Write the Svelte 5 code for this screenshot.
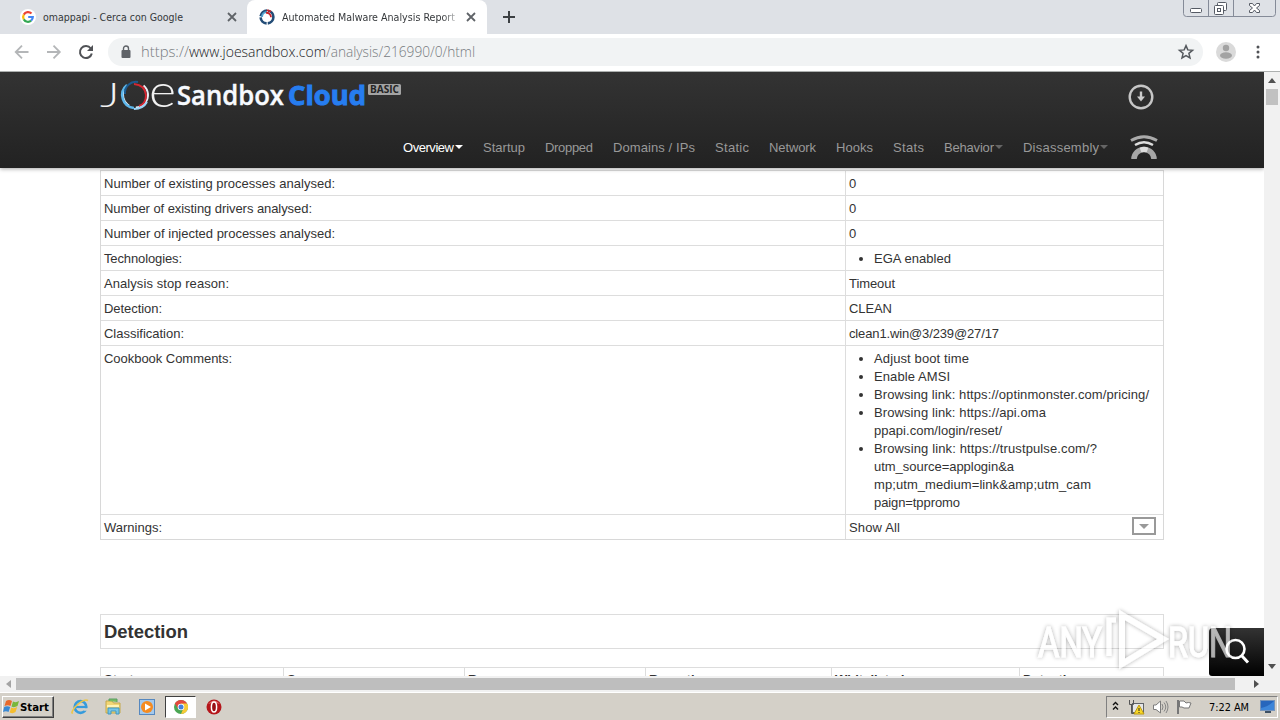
<script>
  const nav = [
    { label: 'Overview', width: 51, gap: 20, caret: true, active: true },
    { label: 'Startup', width: 42, gap: 20 },
    { label: 'Dropped', width: 48, gap: 20 },
    { label: 'Domains / IPs', width: 82, gap: 20 },
    { label: 'Static', width: 34, gap: 20 },
    { label: 'Network', width: 47, gap: 20 },
    { label: 'Hooks', width: 37, gap: 20 },
    { label: 'Stats', width: 31, gap: 20 },
    { label: 'Behavior', width: 50, gap: 20, caret: true },
    { label: 'Disassembly', width: 76, gap: 0, caret: true }
  ];
  const rows = [
    { label: 'Number of existing processes analysed:', w: 231, value: '0', vw: 7 },
    { label: 'Number of existing drivers analysed:', w: 208, value: '0', vw: 7 },
    { label: 'Number of injected processes analysed:', w: 231, value: '0', vw: 7 },
    { label: 'Technologies:', w: 78, items: [[['EGA enabled', 77]]] },
    { label: 'Analysis stop reason:', w: 125, value: 'Timeout', vw: 46 },
    { label: 'Detection:', w: 58, value: 'CLEAN', vw: 43 },
    { label: 'Classification:', w: 80, value: 'clean1.win@3/239@27/17', vw: 150 },
    {
      label: 'Cookbook Comments:', w: 128,
      items: [
        [['Adjust boot time', 95]],
        [['Enable AMSI', 76]],
        [['Browsing link: https://optinmonster.com/pricing/', 275]],
        [['Browsing link: https://api.oma', 172], ['ppapi.com/login/reset/', 128]],
        [
          ['Browsing link: https://trustpulse.com/?', 223],
          ['utm_source=applogin&a', 140],
          ['mp;utm_medium=link&amp;utm_cam', 217],
          ['paign=tppromo', 86]
        ]
      ]
    },
    { label: 'Warnings:', w: 58, value: 'Show All', vw: 51, toggle: true }
  ];
  const columns = ['Strategy', 'Score', 'Range', 'Reporting', 'Whitelisted', 'Detection'];
</script>

{#snippet line(text, width)}
  <svg class="line" width={width} height="18"><text x="0" y="14" textLength={width} lengthAdjust="spacing">{text}</text></svg>
{/snippet}

<div class="screen">
  <div class="tabs">
    <div class="tab idle">
      <svg width="16" height="16" viewBox="0 0 16 16"><circle cx="8" cy="8" r="8" fill="#fff" /><g fill="none" stroke-width="2.2"><path d="M11.5 4.6A4.8 4.8 0 0 0 3.8 5.6" stroke="#ea4335" /><path d="M3.8 5.6A4.9 4.9 0 0 0 3.8 10.4" stroke="#fbbc05" /><path d="M3.8 10.4A4.8 4.8 0 0 0 11.1 11.7" stroke="#34a853" /><path d="M11.1 11.7A5 5 0 0 0 12.8 8H8.2" stroke="#4285f4" /></g></svg>
      <svg class="title" width="145" height="18"><text x="0" y="13" textLength="140" lengthAdjust="spacingAndGlyphs">omappapi - Cerca con Google</text></svg>
      <svg class="close" width="10" height="10" viewBox="0 0 10 10"><path d="M1 1 9 9M9 1 1 9" /></svg>
    </div>
    <div class="tab active">
      <svg width="16" height="16" viewBox="0 0 16 16" fill="none"><circle cx="8" cy="8" r="6.4" stroke="#234d77" stroke-width="2.6" stroke-dasharray="9 1.2" /><path d="M3 8a5 5 0 0 1 5-5" stroke="#51a3d0" stroke-width="2" /><path d="M7 3.800a4.500 4.500 0 0 1 5 4.500M8 1.200l4 1.300" stroke="#c7262d" stroke-width="1.800" /></svg>
      <svg class="title fade" width="175" height="18"><text x="0" y="13" textLength="173" lengthAdjust="spacingAndGlyphs">Automated Malware Analysis Report</text></svg>
      <svg class="close" width="10" height="10" viewBox="0 0 10 10"><path d="M1 1 9 9M9 1 1 9" /></svg>
    </div>
    <svg class="plus" width="12" height="12"><path d="M6 0V12M0 6H12" stroke="#3c4043" stroke-width="2" /></svg>
    <svg class="winbtns" width="94" height="18" fill="none">
      <path d="M.5 0V13.500Q.5 16.500 3.500 16.500H89.500Q92.500 16.500 92.500 13.500V0M25.500 0V16M50.500 0V16" stroke="#858b98" />
      <rect x="7.500" y="8.500" width="11" height="4" rx="1" fill="#fff" stroke="#555a64" />
      <g stroke="#555a64" fill="#fff"><rect x="34.500" y="2.500" width="9" height="8" rx="1" /><rect x="31.500" y="5.500" width="9" height="9" rx="1" /><rect x="34.500" y="8.500" width="3" height="3" /></g>
      <path d="M66.500 3.500H69.500L71.500 6 73.500 3.500H76.500V5.500L73.500 8 76.500 10.500V12.500H73.500L71.500 10 69.500 12.500H66.500V10.500L69.500 8 66.500 5.500Z" fill="#fff" stroke="#555a64" />
    </svg>
  </div>

  <div class="toolbar">
    <svg class="navicons" width="82" height="16" viewBox="0 0 82 16" fill="none" stroke-width="1.8">
      <g stroke="#b4b6b8"><path d="M14.500 8H2M8 1.700 1.700 8 8 14.300" /><path d="M33 8H45.500M39.500 1.700 45.800 8 39.500 14.300" /></g>
      <path d="M76.800 4.500A6 6 0 1 0 77.800 9.500" stroke="#505256" stroke-width="2" /><path d="M79 1V7H73Z" fill="#505256" />
    </svg>
    <div class="address">
      <svg width="10" height="14" viewBox="0 0 10 14"><rect x="0.500" y="5" width="9" height="8" rx="1" fill="#5f6368" /><path d="M2.500 6V3.500a2.500 2.500 0 0 1 5 0V6" fill="none" stroke="#5f6368" stroke-width="1.400" /></svg>
      <svg class="url" width="340" height="22"><text x="0" y="16" fill="#777b80" textLength="48" lengthAdjust="spacingAndGlyphs">https://</text><text x="48" y="16" fill="#202124" textLength="137" lengthAdjust="spacingAndGlyphs">www.joesandbox.com</text><text x="185" y="16" fill="#777b80" textLength="149" lengthAdjust="spacingAndGlyphs">/analysis/216990/0/html</text></svg>
      <svg class="star" width="16" height="16" viewBox="0 0 16 16"><path d="m8 1.600 1.800 4.300 4.700.4-3.600 3 1.100 4.600L8 11.500l-4 2.400 1.100-4.600-3.600-3 4.700-.4Z" fill="none" stroke="#55595e" stroke-width="1.500" /></svg>
    </div>
    <svg class="avatar" width="20" height="20"><circle cx="10" cy="10" r="10" fill="#dadada" /><circle cx="10" cy="6" r="3.200" fill="#a2a2a2" /><ellipse cx="10" cy="13.500" rx="6" ry="3.200" fill="#a2a2a2" /></svg>
    <svg class="menu" width="4" height="14" fill="#505256"><circle cx="2" cy="2" r="1.500" /><circle cx="2" cy="7" r="1.500" /><circle cx="2" cy="12" r="1.500" /></svg>
  </div>

  <div class="middle">
    <div class="page">
      <header>
        <div class="brand">
          <svg width="302" height="36" viewBox="0 0 302 36">
            <text class="thin" x="0" y="29.500" font-size="33" textLength="19.500" lengthAdjust="spacingAndGlyphs">J</text>
            <g fill="none"><circle cx="35.500" cy="18" r="12.500" stroke="#e8eef5" stroke-width="2" stroke-dasharray="30 7 18 24" transform="rotate(-50 35.500 18)" /><path d="M34 31A13 13 0 0 1 27 8" stroke="#5db6ea" stroke-width="2.500" /><path d="M25 17A11 11 0 0 1 38 5" stroke="#1b5a8f" stroke-width="2" /><path d="M34 7Q45 8 46 18 46 27 39 29" stroke="#d42732" stroke-width="2" /><path d="M34 32Q43 32 47 25" stroke="#9bd3f5" stroke-width="2" /></g>
            <text class="thin" x="49" y="29.500" font-size="45" textLength="27" lengthAdjust="spacingAndGlyphs">e</text>
            <text class="bold" x="77" y="28" font-size="27.500" fill="#f7faff" textLength="107" lengthAdjust="spacingAndGlyphs">Sandbox</text>
            <text class="heavy" x="188" y="28" font-size="27.500" fill="#267df0" textLength="78" lengthAdjust="spacingAndGlyphs">Cloud</text>
            <rect x="268" y="7" width="33" height="11" rx="1.500" fill="#a3a3a3" />
            <text class="badge" x="270" y="16" font-size="10" textLength="29" lengthAdjust="spacingAndGlyphs">BASIC</text>
          </svg>
          <svg class="download" width="26" height="26" fill="none"><circle cx="13" cy="13" r="11.300" stroke="#c6c6c6" stroke-width="2.400" /><path d="M13 7.500V14" stroke="#ccc" stroke-width="2.400" /><path d="M9 12.500H17L13 17.500Z" fill="#ccc" /></svg>
        </div>
        <nav>
          {#each nav as item}
            <div class="item" class:current={item.active} style="margin-right:{item.gap}px">
              {@render line(item.label, item.width)}
              {#if item.caret}<i class="caret"></i>{/if}
            </div>
          {/each}
          <svg class="signal" width="30" height="28" viewBox="0 0 30 28" fill="none"><path d="M2 7.500Q15 0 28 7.500" stroke="#aaa" stroke-width="2.800" /><path d="M6 12Q15 6.500 24 12" stroke="#ddd" stroke-width="2.400" /><path d="M5 26A10 9.500 0 0 1 25 26" stroke="#a6a6a6" stroke-width="5.500" /><path d="M11.500 17A10 9.500 0 0 1 18.500 17" stroke="#ddd" stroke-width="5" /></svg>
        </nav>
      </header>

      <div class="info">
        {#each rows as row}
          <div class="row">
            <div class="key">{@render line(row.label, row.w)}</div>
            <div class="value">
              {#if row.items}
                <ul>
                  {#each row.items as item}
                    <li>{#each item as part}{@render line(part[0], part[1])}{/each}</li>
                  {/each}
                </ul>
              {:else}
                {@render line(row.value, row.vw)}
              {/if}
              {#if row.toggle}<span class="toggle"><i></i></span>{/if}
            </div>
          </div>
        {/each}
      </div>
      <h2><svg width="90" height="24"><text x="0" y="19" textLength="84" lengthAdjust="spacingAndGlyphs">Detection</text></svg></h2>
      <div class="scores">
        {#each columns as column}<div>{column}</div>{/each}
      </div>
    </div>
    <div class="vscroll"><i class="up"></i><span></span><i class="down"></i></div>
    <div class="search"><svg width="28" height="28" fill="none" stroke="#fff" stroke-width="2.600"><circle cx="12.500" cy="11" r="9" /><path d="M19 18 25 24.500" stroke-width="3" /></svg></div>
  </div>
  <div class="hscroll"><i class="left"></i><span></span><i class="right"></i></div>

  <div class="taskbar">
    <div class="start">
      <svg width="17" height="17" viewBox="0 0 17 17"><path d="M3 3Q6 1 9 3L7.500 8Q5 6.500 1.500 8Z" fill="#e96a2c" /><path d="M10 3.500Q13 5 16 3L14.500 8Q11 10 8.500 8.500Z" fill="#79b73c" /><path d="M1.200 9Q4 7.500 7.200 9L5.500 14Q3 12.500 0 14Z" fill="#3989d4" /><path d="M8.200 9.500Q11 11 14.200 9L12.500 14Q10 16 6.700 14.500Z" fill="#f5bd2e" /></svg>
      <svg width="32" height="18"><text x="0" y="13" textLength="29" lengthAdjust="spacingAndGlyphs">Start</text></svg>
    </div>
    <svg class="quick" width="90" height="20" fill="none">
      <g><circle cx="9.500" cy="10" r="5.800" stroke="#369bdc" stroke-width="2.700" /><path d="M5 10H15" stroke="#369bdc" stroke-width="2.200" /><path d="M12.500 12.500H17" stroke="#d4d0c8" stroke-width="2.500" /><path d="M2 16Q-1 17 4 10 13 1 17 3.500" stroke="#edc649" stroke-width="1.500" /></g>
      <g transform="translate(34)"><path d="M1 4H7L8.500 6H15V16H1Z" fill="#f2d675" stroke="#c4a84b" /><path d="M4 4V2H12V5" fill="#78bc61" stroke="#5b9f67" /><path d="M2 9H14" stroke="#fff3b5" stroke-width="2" /><path d="M3 17V11H14V17H11V14H6V17Z" fill="#76c5e7" stroke="#4197c2" /></g>
      <g transform="translate(68)"><rect x=".5" y="2.500" width="15" height="15" fill="#a4c9ec" stroke="#5688bf" /><circle cx="8" cy="10" r="6" fill="#f58b20" /><path d="M6 6.500 12 10 6 13.500Z" fill="#fff" /></g>
    </svg>
    <div class="pressed"><svg width="14" height="14" viewBox="0 0 14 14"><circle cx="7" cy="7" r="7" fill="#4aa653" /><path d="M.9 3.500A7 7 0 0 1 13.100 3.500L7 7 4 8.500Z" fill="#e3483d" /><path d="M13.100 3.500A7 7 0 0 1 7 14L9.500 8 7 3.500Z" fill="#f7ca36" /><circle cx="7" cy="7" r="3.300" fill="#fff" /><circle cx="7" cy="7" r="2.500" fill="#4380dc" /></svg></div>
    <svg class="opera" width="16" height="16"><circle cx="8" cy="8" r="7.500" fill="#b5161b" /><path d="M2 5Q8-2 14 5 8 3 2 5" fill="#df6465" /><ellipse cx="8" cy="8" rx="2.600" ry="5" fill="#981015" stroke="#fff" stroke-width="1.500" /></svg>
    <div class="tray">
      <svg width="86" height="20" fill="none">
        <path d="m1 8 2.500-2.500L6 8M1 12.500 3.500 10 6 12.500" stroke="#111" stroke-width="1.400" />
        <g transform="translate(16 2)"><rect x="4.500" y="4.500" width="11" height="9" fill="#e5e6e7" stroke="#606469" /><path d="M1.500 1V5.500H5.500V1M3.500 5.500V14.500H8" stroke="#555" /><path d="M11 6 16 15H6Z" fill="#f8d726" stroke="#bd9a13" /><path d="M11 9V12M11 13V14" stroke="#222" /></g>
        <g transform="translate(40 2)"><path d="M1.500 6H4L8.500 2V14L4 10.500H1.500Z" fill="#fff" stroke="#7c7c7c" /><path d="M10 5Q12 8 10 11M12 3.500Q15.500 8 12 12.500M14 2Q18 8 14 14" stroke="#858585" /></g>
        <g transform="translate(64 2)"><path d="M2 1V15" stroke="#777" stroke-width="2" /><path d="M3.500 2H8L10 4Q12 3 15 4L13 9H8L6 8H3.500Z" fill="#fff" stroke="#777" /></g>
      </svg>
      <svg class="time" width="43" height="18"><text x="0" y="13" textLength="40" lengthAdjust="spacingAndGlyphs">7:22 AM</text></svg>
      <svg class="desktop" width="16" height="15"><rect x=".5" y="1.500" width="14" height="10" fill="#2766bc" stroke="#7694bb" /><path d="M1 9Q8 8 14 2V11H1Z" fill="#3e86d9" /><path d="M5 13H11" stroke="#3e5063" stroke-width="2" /></svg>
    </div>
  </div>

  <svg class="watermark" width="204" height="72" viewBox="0 0 204 72">
    <defs><filter id="shade" x="-10%" y="-20%" width="120%" height="140%"><feDropShadow dx="0" dy="0" stdDeviation="2" flood-color="#000" flood-opacity=".5" /></filter></defs>
    <g filter="url(#shade)" opacity=".65" fill="#fff" stroke="#fff"><text x="4" y="52" textLength="64" lengthAdjust="spacingAndGlyphs">ANY</text><text x="134" y="52" textLength="64" lengthAdjust="spacingAndGlyphs">RUN</text><g fill="none" stroke-width="6"><path d="M75 51V15H82" stroke-width="5" /><path d="M88 10 129 34 88 59Z" /></g></g>
  </svg>
</div>

<style>
  :global(body) { margin: 0; overflow: hidden; }
  * { box-sizing: border-box; }
  .screen { width: 1280px; height: 720px; position: relative; display: flex; flex-direction: column; overflow: hidden; background: #fff; font: 13px/18px "Liberation Sans", Arial, sans-serif; color: #333; }
  svg { display: block; flex: none; overflow: visible; }
  .line { font-size: 13px; fill: currentColor; }
  .tabs { height: 34px; flex: none; display: flex; background: #dee1e6; }
  .tab { display: flex; align-items: center; height: 34px; }
  .idle { width: 247px; padding-left: 20px; }
  .active { width: 240px; padding-left: 12px; background: #fff; border-radius: 8px 8px 0 0; }
  .title { margin-left: 7px; font: 11px "DejaVu Sans Condensed", "DejaVu Sans", sans-serif; fill: #35383b; }
  .fade { mask-image: linear-gradient(90deg, #000 160px, rgba(0,0,0,.35) 173px); }
  .close { margin-left: 39px; fill: none; stroke: #5f6368; stroke-width: 1.8; }
  .active .close { margin-left: 9px; }
  .plus { margin: 11px 0 0 16px; }
  .winbtns { margin-left: auto; margin-right: 3px; }
  .toolbar { height: 38px; flex: none; display: flex; align-items: center; border-bottom: 1px solid #adb0af; background: #fff; padding: 0 0 1px 14px; }
  .address { display: flex; align-items: center; width: 1095px; height: 28px; margin-left: 12px; padding-left: 13px; border-radius: 14px; background: #f1f3f4; }
  .url { margin-left: 10px; font: 14px "Open Sans", sans-serif; font-weight: 300; }
  .star { margin-left: auto; margin-right: 9px; }
  .avatar { margin-left: 13px; }
  .menu { margin-left: 20px; }
  .middle { height: 604px; flex: none; display: flex; position: relative; overflow: hidden; }
  .page { width: 1264px; height: 604px; overflow: hidden; }
  header { height: 96px; background: linear-gradient(#333, #222); box-shadow: 0 1px 4px rgba(0,0,0,.35); position: relative; display: flex; flex-direction: column; }
  .brand { display: flex; height: 56px; padding: 5px 0 0 100px; }
  .thin { font-family: Lato, sans-serif; font-weight: 300; fill: #f2f2f2; }
  .bold { font-family: "Open Sans", sans-serif; font-weight: 600; stroke: #f7faff; stroke-width: .4px; }
  .heavy { font-family: "Open Sans", sans-serif; font-weight: 700; stroke: #267df0; stroke-width: 1px; }
  .badge { font-family: "Open Sans", sans-serif; font-weight: 700; fill: #242424; }
  .download { margin: 7px 0 0 726px; }
  nav { display: flex; align-items: center; height: 38px; padding-left: 403px; color: #999; }
  .item { display: flex; align-items: center; }
  .current { color: #fff; }
  .caret { margin-left: 1px; border: 4px solid transparent; border-top-color: currentColor; border-bottom: 0; }
  .item:not(.current) .caret { opacity: .55; }
  .signal { margin-left: 21px; }
  .info { width: 1064px; margin: 2px 0 0 100px; border: 1px solid #d8d8d8; border-top-color: #ddd; }
  .row { display: flex; border-bottom: 1px solid #ddd; }
  .row:last-child { border-bottom: 0; }
  .key { width: 745px; padding: 3px; border-right: 1px solid #ddd; }
  .value { flex: 1; display: flex; padding: 3px; }
  ul { margin: 0 0 0 25px; padding: 0; list-style: none; }
  li { position: relative; }
  li::before { content: ""; position: absolute; left: -15px; top: 8px; width: 4px; height: 4px; border-radius: 50%; background: #333; }
  .toggle { margin: -1px 4px 0 auto; width: 24px; height: 18px; border: 2px solid #999; display: grid; place-items: center; }
  .toggle i { border: 5px solid transparent; border-top-color: #999; border-bottom: 0; }
  h2 { width: 1064px; height: 35px; margin: 74px 0 0 100px; border: 1px solid #ddd; padding: 4px 3px; font: bold 18px "Liberation Sans", Arial, sans-serif; }
  h2 svg { fill: #333; }
  .scores { width: 1064px; height: 40px; margin: 18px 0 0 100px; display: grid; grid-template-columns: 183px 181px 181px 186px 188px 1fr; border: 1px solid #ddd; font-weight: bold; }
  .scores div { padding: 3px; border-right: 1px solid #ddd; }
  .scores div:last-child { border-right: 0; }
  .vscroll { width: 16px; background: #f1f1f1; display: flex; flex-direction: column; align-items: center; padding: 6px 0 7px; }
  .vscroll span { width: 12px; height: 16px; margin-top: 6px; background: #c1c1c1; }
  .up, .down { border: 4px solid transparent; }
  .up { border-bottom: 5px solid #505050; border-top: 0; }
  .down { border-top: 5px solid #505050; border-bottom: 0; margin-top: auto; }
  .search { position: absolute; left: 1209px; top: 556px; width: 55px; height: 48px; padding: 10px 14px; border-radius: 4px 0 0 3px; background: linear-gradient(#333, #000); }
  .hscroll { height: 16px; flex: none; display: flex; align-items: center; background: #f1f1f1; padding: 0 21px 0 6px; }
  .hscroll span { width: 1219px; height: 12px; margin-left: 5px; background: #bebebe; }
  .left, .right { border: 4px solid transparent; }
  .left { border-right: 5px solid #a3a3a3; border-left: 0; }
  .right { border-left: 5px solid #505050; border-right: 0; margin-left: auto; }
  .taskbar { height: 28px; flex: none; display: flex; align-items: center; background: #d4d0c8; border-top: 1px solid #fff; padding: 1px 2px 1px; }
  .start { width: 52px; height: 22px; display: flex; align-items: center; gap: 0; border: 1px solid; border-color: #fff #404040 #404040 #fff; box-shadow: inset -1px -1px #808080; font: bold 11px "DejaVu Sans Condensed", sans-serif; fill: #000; }
  .quick { margin-left: 17px; }
  .pressed { width: 31px; height: 22px; margin-left: 4px; background: #fff; display: grid; place-items: center; border: 1px solid; border-color: #404040 #fff #fff #404040; }
  .opera { margin-left: 10px; }
  .tray { width: 172px; height: 22px; margin-left: auto; display: flex; align-items: center; border: 1px solid; border-color: #808080 #fff #fff #808080; padding-left: 5px; }
  .time { margin-left: 11px; font: 11px "DejaVu Sans Condensed", sans-serif; }
  .desktop { margin-left: 8px; }
  .watermark { position: absolute; left: 1034px; top: 605px; font: 43px "Roboto", sans-serif; }
</style>
